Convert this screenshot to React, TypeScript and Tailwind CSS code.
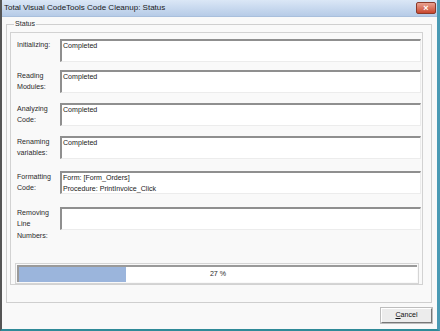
import React from "react";

const rows: { label: string[]; lines: string[]; mt: string }[] = [
  { label: ["Initializing:"], lines: ["Completed"], mt: "mt-[6px]" },
  { label: ["Reading", "Modules:"], lines: ["Completed"], mt: "mt-[8px]" },
  { label: ["Analyzing", "Code:"], lines: ["Completed"], mt: "mt-[10px]" },
  { label: ["Renaming", "variables:"], lines: ["Completed"], mt: "mt-[10px]" },
  {
    label: ["Formatting", "Code:"],
    lines: ["Form: [Form_Orders]", "Procedure: PrintInvoice_Click"],
    mt: "mt-[12px]",
  },
  { label: ["Removing", "Line", "Numbers:"], lines: [], mt: "mt-[13px]" },
];

function StatusRow({ label, lines, mt }: { label: string[]; lines: string[]; mt: string }) {
  return (
    <div className={`flex h-[23px] ${mt}`}>
      <div className="w-[48px] shrink-0 pl-[5px] pt-[1px] leading-[11.3px] text-[#2a2a2a]">
        {label.map((l) => (
          <div key={l}>{l}</div>
        ))}
      </div>
      {/* sunken text box */}
      <div className="flex-1 h-[23px] bg-white border-t-2 border-l-2 border-t-[#8f8f8f] border-l-[#8f8f8f] border-r border-b border-r-[#ececec] border-b-[#ececec] pl-[1px] leading-[11px] text-[#1a1a1a]">
        {lines.map((l) => (
          <div key={l}>{l}</div>
        ))}
      </div>
    </div>
  );
}

export default function App() {
  return (
    <div
      className="w-[440px] h-[331px] flex flex-col overflow-hidden bg-[#f9f9f9] border-l-2 border-l-[#555] border-r-[3px] border-r-[#4a9ab4] border-b-2 border-b-[#2f8a98] text-[7.1px]"
      style={{ fontFamily: '"Liberation Sans", Arial, sans-serif' }}
    >
      {/* Title bar */}
      <div className="h-[17px] shrink-0 flex items-center justify-between pl-[2px] pr-[1px] bg-gradient-to-b from-[#dbe7f6] to-[#b6cbe7] border-b border-[#a9bfdc]">
        <span className="text-[8px] text-[#1a1a1a]">Total Visual CodeTools Code Cleanup: Status</span>
        <div className="w-[20px] h-[12px] rounded-[2px] bg-gradient-to-b from-[#e8a191] to-[#c8452d] border border-[#8b3a2a] flex items-center justify-center text-white text-[9px] leading-none font-bold">
          ×
        </div>
      </div>

      {/* Client */}
      <div className="flex-1 flex flex-col pl-[4px] pr-[5px] pt-[2px]">
        {/* Group box */}
        <fieldset className="border border-[#cfcfcf] h-[284px] px-[3px] pb-[7px] pt-[3px] m-0 flex flex-col">
          <legend className="ml-[4px] px-[1px] text-[#2a2a2a] leading-[10px]">Status</legend>
          <div className="flex-1 mr-[5px] border border-[#d2d2d2] flex flex-col px-[1px]">
            {rows.map((r) => (
              <StatusRow key={r.label.join()} {...r} />
            ))}
            {/* progress */}
            <div className="mt-[33px] ml-[3px] mr-[2px] h-[21px] border border-[#d5d5d5] p-[1px]">
              <div className="relative h-full border-t-2 border-l-2 border-t-[#9a9a9a] border-l-[#9a9a9a] bg-white">
                <div className="h-full w-[107px] bg-[#9bb5dc]" />
                <span className="absolute inset-0 flex items-center justify-center text-[#2a2a2a]">27 %</span>
              </div>
            </div>
          </div>
        </fieldset>

        <div className="flex justify-end mt-[5px]">
          <button className="w-[51px] h-[15px] bg-[#ececec] border border-t-white border-l-white border-r-[#777] border-b-[#777] outline outline-1 outline-[#bdbdbd] text-[#111] leading-none">
            <span className="underline">C</span>ancel
          </button>
        </div>
      </div>
    </div>
  );
}
